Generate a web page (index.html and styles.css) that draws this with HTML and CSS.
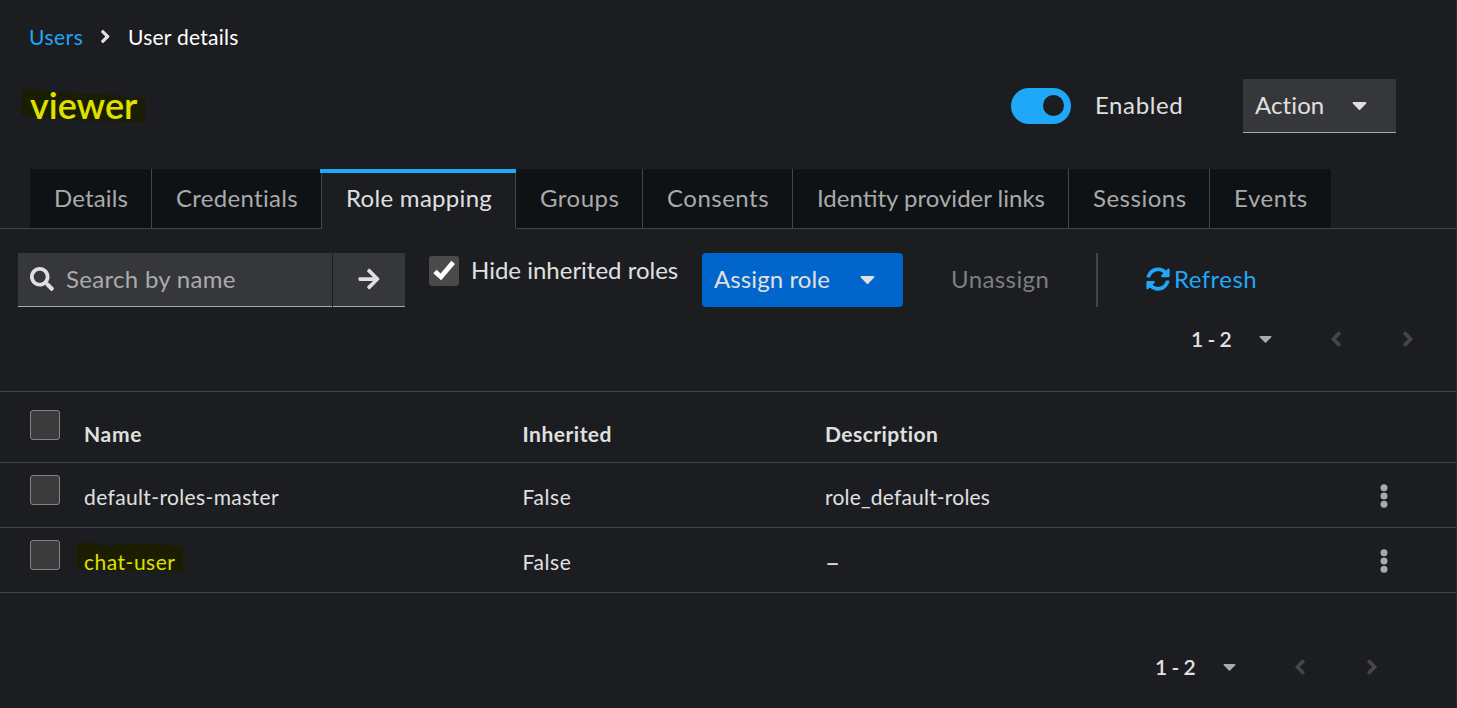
FILE: index.html
```html
<!DOCTYPE html>
<html lang="en">
<head>
<meta charset="utf-8">
<title>User details</title>
<link rel="stylesheet" href="styles.css">
</head>
<body>
<svg class="sprite" aria-hidden="true">
  <symbol id="angle-right" viewBox="0 0 256 512"><path d="M224.3 273l-136 136c-9.4 9.4-24.6 9.4-33.9 0l-22.6-22.6c-9.4-9.4-9.4-24.6 0-33.9l96.4-96.4-96.4-96.4c-9.4-9.4-9.4-24.6 0-33.9L54.3 103c9.4-9.4 24.6-9.4 33.9 0l136 136c9.5 9.4 9.5 24.6.1 34z"/></symbol>
  <symbol id="caret" viewBox="0 0 320 512"><path d="M31.3 192h257.3c17.8 0 26.7 21.5 14.1 34.1L174.1 354.8c-7.8 7.8-20.5 7.8-28.3 0L17.2 226.1C4.6 213.5 13.5 192 31.3 192z"/></symbol>
  <symbol id="kebab" viewBox="0 0 8 26"><circle cx="4" cy="4.8" r="3.5"/><circle cx="4" cy="13" r="3.5"/><circle cx="4" cy="21.2" r="3.5"/></symbol>
</svg>
<div class="page">
  <nav class="breadcrumb">
    <a class="crumb link">Users</a>
    <svg class="crumb-sep"><use href="#angle-right"/></svg>
    <span class="crumb current">User details</span>
  </nav>

  <header class="header">
    <h1 class="title"><svg class="marker marker-title" viewBox="0 0 125 34"><path d="M0 0H11L21 2 60 5 96 6 103 8H124V33H96L94 32H62L13 28 7 26H0Z"/></svg><span class="title-text">viewer</span></h1>
    <div class="switch"><span class="knob"></span></div>
    <span class="switch-label">Enabled</span>
    <button class="action"><span class="action-text">Action</span><svg class="caret"><use href="#caret"/></svg></button>
  </header>

  <div class="tabs">
    <div class="tab t-details">Details</div>
    <div class="tab t-credentials">Credentials</div>
    <div class="tab t-role active">Role mapping</div>
    <div class="tab t-groups">Groups</div>
    <div class="tab t-consents">Consents</div>
    <div class="tab t-identity">Identity provider links</div>
    <div class="tab t-sessions">Sessions</div>
    <div class="tab t-events">Events</div>
  </div>

  <div class="toolbar">
    <div class="search">
      <svg class="search-icon" viewBox="0 0 512 512"><path d="M505 442.7L405.3 343c-4.5-4.5-10.6-7-17-7H372c27.6-35.3 44-79.7 44-128C416 93.1 322.9 0 208 0S0 93.1 0 208s93.1 208 208 208c48.3 0 92.7-16.4 128-44v16.3c0 6.4 2.5 12.5 7 17l99.7 99.7c9.4 9.4 24.6 9.4 33.9 0l28.3-28.3c9.4-9.4 9.4-24.6.1-34zM208 336c-70.7 0-128-57.2-128-128 0-70.7 57.2-128 128-128 70.7 0 128 57.2 128 128 0 70.7-57.2 128-128 128z"/></svg>
      <span class="placeholder">Search by name</span>
    </div>
    <button class="go"><svg class="arrow" viewBox="0 0 448 512"><path d="M190.5 66.9l22.2-22.2c9.4-9.4 24.6-9.4 33.9 0L441 239c9.4 9.4 9.4 24.6 0 33.9L246.6 467.3c-9.4 9.4-24.6 9.4-33.9 0l-22.2-22.2c-9.5-9.5-9.3-25 .4-34.3L311.4 296H24c-13.3 0-24-10.7-24-24v-32c0-13.3 10.7-24 24-24h287.4L190.9 101.2c-9.8-9.3-10-24.8-.4-34.3z"/></svg></button>
    <div class="hide-roles">
      <svg class="checked" viewBox="0 0 30 30"><path d="M4.3 17.2 7.6 13.8 11.6 17.6 22.4 4.8 26 8 12.2 24.2Z"/></svg>
      <span class="hide-label">Hide inherited roles</span>
    </div>
    <button class="assign"><span class="assign-text">Assign role</span><svg class="caret"><use href="#caret"/></svg></button>
    <span class="unassign">Unassign</span>
    <span class="divider"></span>
    <a class="refresh"><svg class="refresh-icon" viewBox="0 0 512 512"><path d="M370.72 133.28C339.458 104.008 298.888 87.962 255.848 88c-77.458.068-144.328 53.178-162.791 126.85-1.344 5.363-6.122 9.15-11.651 9.15H24.103c-7.498 0-13.194-6.807-11.807-14.176C33.933 94.924 134.813 8 256 8c66.448 0 126.791 26.136 171.315 68.685L463.03 40.97C478.149 25.851 504 36.559 504 57.941V192c0 13.255-10.745 24-24 24H345.941c-21.382 0-32.09-25.851-16.971-40.971l41.75-41.749zM32 296h134.059c21.382 0 32.09 25.851 16.971 40.971l-41.75 41.75c31.262 29.273 71.835 45.319 114.876 45.28 77.418-.07 144.315-53.144 162.787-126.849 1.344-5.363 6.122-9.15 11.651-9.15h57.304c7.498 0 13.194 6.807 11.807 14.176C478.067 417.076 377.187 504 256 504c-66.448 0-126.791-26.136-171.315-68.685L48.97 471.03C33.851 486.149 8 475.441 8 454.059V320c0-13.255 10.745-24 24-24z"/></svg><span>Refresh</span></a>
  </div>

  <div class="pager pager-top">
    <span class="range">1 - 2</span>
    <svg class="pager-caret"><use href="#caret"/></svg>
    <svg class="pager-arrow prev"><use href="#angle-right"/></svg>
    <svg class="pager-arrow"><use href="#angle-right"/></svg>
  </div>

  <div class="table">
    <div class="row head">
      <span class="box"></span>
      <span class="cell c-name">Name</span>
      <span class="cell c-inherited">Inherited</span>
      <span class="cell c-description">Description</span>
    </div>
    <div class="row">
      <span class="box"></span>
      <span class="cell c-default">default-roles-master</span>
      <span class="cell c-false">False</span>
      <span class="cell c-role">role_default-roles</span>
      <svg class="kebab"><use href="#kebab"/></svg>
    </div>
    <div class="row">
      <span class="box"></span>
      <span class="cell c-chat"><svg class="marker marker-chat" viewBox="0 0 106 30"><path d="M0 0H19L23 2.3 33 2.7 41 1H83L86 2.3 106 3V28.7H88L86 27.7H50L0 26Z"/></svg><span class="chat-text">chat-user</span></span>
      <span class="cell c-false">False</span>
      <span class="cell c-empty">–</span>
      <svg class="kebab"><use href="#kebab"/></svg>
    </div>
  </div>

  <div class="pager pager-bottom">
    <span class="range">1 - 2</span>
    <svg class="pager-caret"><use href="#caret"/></svg>
    <svg class="pager-arrow prev"><use href="#angle-right"/></svg>
    <svg class="pager-arrow"><use href="#angle-right"/></svg>
  </div>
</div>
</body>
</html>
```
FILE: styles.css
```css
* { box-sizing: border-box; }

body {
  margin: 0;
  background: #1b1d21;
  color: #e0e0e0;
  font: 24px/36px Lato, "Open Sans", sans-serif;
  overflow: hidden;
}

svg { display: block; flex: none; fill: currentColor; }
.sprite { display: none; }

button {
  margin: 0;
  padding: 0;
  border: 0;
  font: inherit;
  color: inherit;
}

.page {
  display: flex;
  flex-direction: column;
  width: 1457px;
  height: 708px;
  border-right: 1px solid #292b2d;
  white-space: nowrap;
}

/* Breadcrumb */
.breadcrumb {
  display: flex;
  height: 79px;
  padding: 21px 0 0 29px;
  font-size: 21px;
  line-height: 32px;
}
.crumb.link { width: 71px; color: #1fa7f8; letter-spacing: 0.5px; }
.crumb-sep { width: 10.5px; height: 21px; margin: 5px 17.5px 0 0; }
.crumb.current { color: #fff; letter-spacing: 0.25px; }

/* Title, switch and action menu */
.header { display: flex; height: 90px; }
.title {
  position: relative;
  width: 981px;
  margin: 0 0 0 30px;
  padding-top: 1px;
  font-size: 36px;
  font-weight: 600;
  line-height: 50px;
  color: #dfe000;
}
.title-text { position: relative; }
.marker { position: absolute; fill: #1b1d00; }
.marker-title { left: -9px; top: 10px; width: 125px; height: 34px; }
.switch {
  display: flex;
  justify-content: flex-end;
  width: 60px;
  height: 36px;
  margin-top: 9px;
  padding: 7px 7px 0 0;
  border-radius: 18px;
  background: #1fa7f8;
}
.knob { width: 21px; height: 21px; border-radius: 50%; background: #1b1d21; }
.switch-label { width: 148px; margin: 8px 0 0 24px; letter-spacing: 0.6px; }
.action {
  display: flex;
  align-items: center;
  width: 153px;
  height: 54px;
  padding: 0 0 2px 12px;
  background: #36373a;
  border-bottom: 1px solid #aaabac;
}
.action-text { width: 97px; text-align: left; letter-spacing: 0.1px; }
.caret { width: 15px; height: 24px; }

/* Tabs */
.tabs { display: flex; height: 60px; }
.tabs::before, .tabs::after { content: ""; border-bottom: 1px solid #444548; }
.tabs::before { width: 30px; }
.tabs::after { flex: 1; }
.tab {
  padding: 11px 0 0 24px;
  color: #a9aaac;
  background: #0f1214;
  border-right: 1px solid #444548;
  border-bottom: 1px solid #444548;
}
.tab.active {
  position: relative;
  color: #e0e0e0;
  background: #1b1d21;
  border-bottom-color: transparent;
}
.tab.active::before {
  content: "";
  position: absolute;
  left: -2px;
  right: -1px;
  top: 0;
  height: 4px;
  background: #1fa7f8;
}
.t-details { width: 122px; letter-spacing: 0.15px; }
.t-credentials { width: 170px; letter-spacing: 0.3px; }
.t-role { width: 194px; letter-spacing: 0.3px; }
.t-groups { width: 127px; letter-spacing: 0.5px; }
.t-consents { width: 150px; letter-spacing: 0.5px; }
.t-identity { width: 276px; }
.t-sessions { width: 141px; letter-spacing: 0.5px; }
.t-events { width: 121px; border-right: 0; letter-spacing: 0.6px; }

/* Toolbar */
.toolbar { display: flex; height: 78px; padding: 24px 0 0 18px; }
.search, .go { height: 54px; background: #36373a; border-bottom: 1px solid #aaabac; }
.search { display: flex; width: 314px; padding: 8px 0 0 12px; }
.search-icon { width: 24px; height: 24px; margin: 6px 12px 0 0; }
.placeholder { color: #aaabac; letter-spacing: 0.3px; }
.go { display: flex; width: 72px; margin-left: 1px; padding: 14px 0 0 25px; }
.arrow { width: 22px; height: 24px; }
.hide-roles { display: flex; width: 297px; padding-left: 24px; }
.checked {
  width: 30px;
  height: 30px;
  margin: 3px 12px 0 0;
  border-radius: 3px;
  background: #4c4a48;
  fill: #fff;
}
.hide-label { line-height: 34px; }
.assign {
  display: flex;
  align-items: center;
  width: 201px;
  height: 54px;
  padding: 0 0 2px 12px;
  border-radius: 4px;
  background: #06c;
}
.assign-text { width: 145.5px; text-align: left; letter-spacing: 0.1px; }
.unassign { width: 147px; margin: 8px 0 0 48px; color: #7d7e81; letter-spacing: 0.4px; }
.divider { width: 2px; height: 54px; margin: 0 48px 0 -2px; background: #444548; }
.refresh { display: flex; padding-top: 8px; color: #1fa7f8; letter-spacing: 0.45px; }
.refresh-icon { width: 24px; height: 24px; margin: 6px 4px 0 0; }

/* Pagination */
.pager { display: flex; font-size: 21px; font-weight: 600; line-height: 32px; }
.pager-top { height: 84px; padding: 16px 0 0 1191px; }
.pager-bottom { padding: 58px 0 0 1155px; }
.range { flex: none; width: 68px; word-spacing: -1px; }
.pager-caret { width: 13px; height: 21px; margin: 5px 58px 0 0; color: #a9aaac; }
.pager-arrow { width: 12px; height: 24px; margin: 4px 0 0 0; color: #444548; }
.prev { margin-right: 60px; transform: scaleX(-1); }

/* Table */
.table { border-top: 1px solid #444548; font-size: 21px; line-height: 32px; }
.row {
  display: grid;
  grid-template-columns: 54px 438.5px 302.5px 555px 8px;
  height: 65px;
  padding-left: 30px;
  border-bottom: 1px solid #444548;
}
.head { height: 71px; font-weight: 700; }
.box {
  width: 30px;
  height: 30px;
  margin-top: 12px;
  border: 1px solid #858585;
  border-radius: 3px;
  background: #3b3b3b;
}
.head .box { margin-top: 18px; }
.cell { padding-top: 18px; }
.head .cell { padding-top: 26px; }
.kebab { width: 8px; height: 26px; margin-top: 20px; color: #a9aaac; }
.c-name { letter-spacing: 0.7px; }
.c-inherited { letter-spacing: 0.5px; }
.c-description { letter-spacing: 0.45px; }
.c-default { letter-spacing: 0.37px; }
.c-false { letter-spacing: 0.6px; }
.c-role { letter-spacing: 0.2px; }
.c-empty { font-size: 26px; }
.c-chat { position: relative; color: #dfe000; letter-spacing: 0.5px; }
.chat-text { position: relative; }
.marker-chat { left: -7px; top: 15px; width: 106px; height: 30px; }
```
